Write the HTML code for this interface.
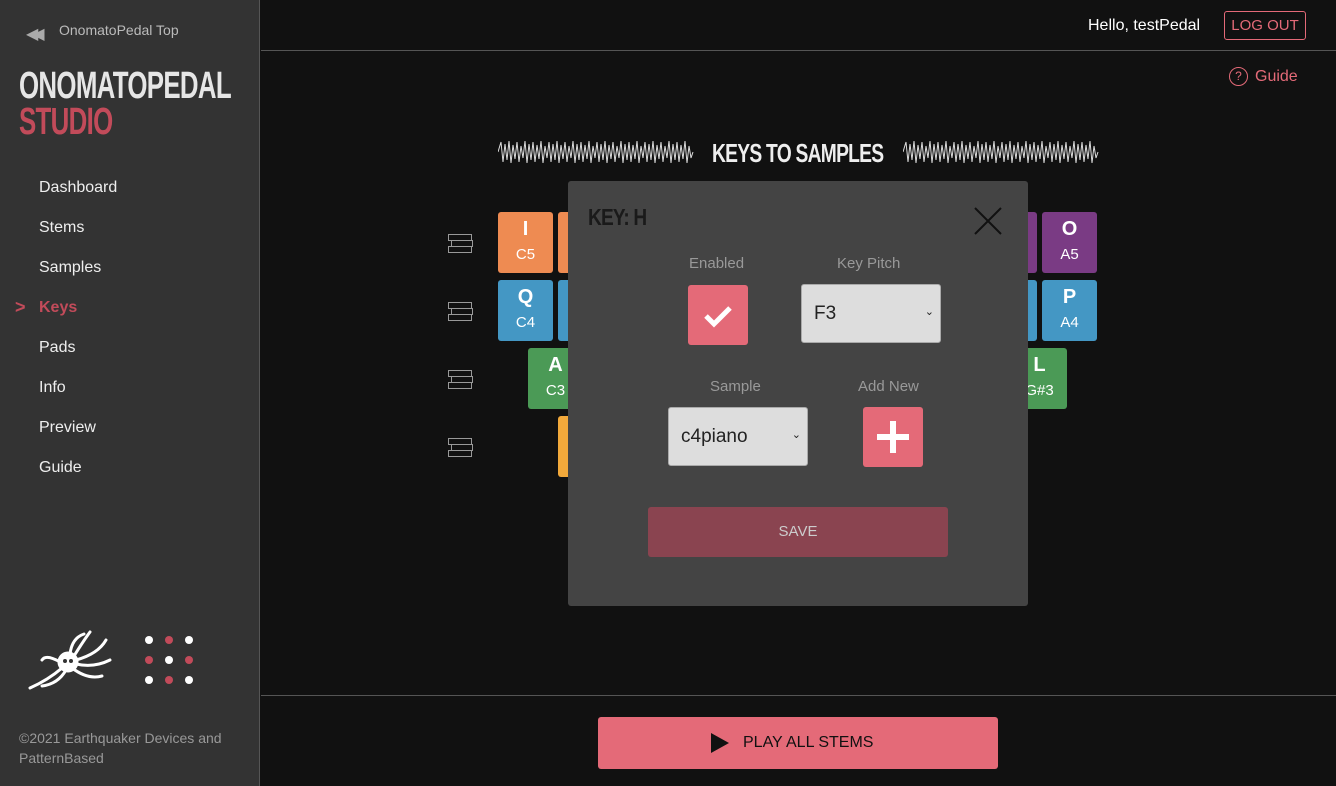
<!DOCTYPE html>
<html><head><style>
*{margin:0;padding:0;box-sizing:border-box}
body{width:1336px;height:786px;background:#111;font-family:"Liberation Sans",sans-serif;position:relative;overflow:hidden;color:#fff}
.side{position:absolute;left:0;top:0;width:260px;height:786px;background:#333;border-right:1px solid #555}
.top{position:absolute;left:59px;top:22px;font-size:14px;color:#bbb}
.logo{position:absolute;left:19px;top:68px;font-weight:bold;font-size:38px;line-height:36px;letter-spacing:-1px;transform:scaleX(.68);transform-origin:left;white-space:nowrap}
.nav{position:absolute;left:39px;font-size:16px;color:#eee}
.abs{position:absolute}
.key{position:absolute;width:55px;height:61px;border-radius:3px;text-align:center;color:#fff}
.key b{display:block;font-size:20px;margin-top:6px;height:28px}
.key span{font-size:15px}
.ico{position:absolute;left:448px;width:26px;height:20px}
.ico div{position:absolute;border:1.5px solid #999;height:7px}
</style></head><body>
<div class="side">
<div class="abs" style="left:26px;top:24px;color:#aaa;font-size:16px;letter-spacing:-6px">◀◀</div>
<div class="top">OnomatoPedal Top</div>
<div class="logo"><div style="color:#e6e6e6">ONOMATOPEDAL</div><div style="color:#c24b5a">STUDIO</div></div>
<div class="nav" style="top:179px">Dashboard</div>
<div class="nav" style="top:219px">Stems</div>
<div class="nav" style="top:259px">Samples</div>
<div class="nav" style="top:299px;color:#c24b5a;font-weight:bold">Keys</div>
<div class="abs" style="left:15px;top:297px;color:#c24b5a;font-size:18px;font-weight:bold">&gt;</div>
<div class="nav" style="top:339px">Pads</div>
<div class="nav" style="top:379px">Info</div>
<div class="nav" style="top:419px">Preview</div>
<div class="nav" style="top:459px">Guide</div>
<svg class="abs" style="left:28px;top:630px" width="86" height="62" viewBox="0 0 86 62" fill="none" stroke="#fff" stroke-width="3" stroke-linecap="round">
<circle cx="40" cy="32" r="9" fill="#fff"/><path d="M34 38 Q20 50 2 58 M38 40 Q30 54 14 56 M44 38 Q60 50 74 46 M48 30 Q70 24 78 10 M46 26 Q56 10 62 2 M42 24 Q44 8 56 4 M32 32 Q18 24 14 30 M48 34 Q66 38 82 30"/>
<circle cx="37" cy="31" r="2" fill="#333" stroke="none"/><circle cx="43" cy="31" r="2" fill="#333" stroke="none"/></svg>
<svg class="abs" style="left:143px;top:634px" width="54" height="54">
<g fill="#fff"><circle cx="6" cy="6" r="4"/><circle cx="46" cy="6" r="4"/><circle cx="26" cy="26" r="4"/><circle cx="6" cy="46" r="4"/><circle cx="46" cy="46" r="4"/></g>
<g fill="#c24b5a"><circle cx="26" cy="6" r="4"/><circle cx="6" cy="26" r="4"/><circle cx="46" cy="26" r="4"/><circle cx="26" cy="46" r="4"/></g></svg>
<div class="abs" style="left:19px;top:728px;font-size:14px;line-height:20px;color:#999">©2021 Earthquaker Devices and<br>PatternBased</div>
</div>
<div class="abs" style="left:261px;top:50px;width:1075px;height:1px;background:#555"></div>
<div class="abs" style="left:261px;top:695px;width:1075px;height:1px;background:#555"></div>
<div class="abs" style="left:1088px;top:17px;font-size:16px">Hello, testPedal</div>
<div class="abs" style="left:1224px;top:11px;width:82px;height:29px;border:1px solid #e46a78;border-radius:3px;color:#e46a78;font-size:15px;text-align:center;line-height:27px">LOG OUT</div>
<div class="abs" style="left:1229px;top:67px;width:19px;height:19px;border:1.5px solid #e46a78;border-radius:50%;color:#e46a78;font-size:12px;text-align:center;line-height:16px">?</div>
<div class="abs" style="left:1255px;top:68px;font-size:16px;color:#e46a78">Guide</div>
<svg class="abs" style="left:498px;top:138px" width="196" height="28"><polyline fill="none" stroke="#ddd" stroke-width="1" points="0,14 3,4 5,24 7,6 9,22 11,3 13,25 15,7 17,21 19,4 21,24 23,8 25,20 27,3 29,25 31,6 33,22 35,4 37,24 39,7 41,21 43,3 45,25 47,8 49,20 51,4 53,24 55,6 57,22 59,3 61,25 63,7 65,21 67,4 69,24 71,8 73,20 75,3 77,25 79,6 81,22 83,4 85,24 87,7 89,21 91,3 93,25 95,8 97,20 99,4 101,24 103,6 105,22 107,3 109,25 111,7 113,21 115,4 117,24 119,8 121,20 123,3 125,25 127,6 129,22 131,4 133,24 135,7 137,21 139,3 141,25 143,8 145,20 147,4 149,24 151,6 153,22 155,3 157,25 159,7 161,21 163,4 165,24 167,8 169,20 171,3 173,25 175,6 177,22 179,4 181,24 183,7 185,21 187,3 189,25 191,8 193,20 195,14"/></svg>
<svg class="abs" style="left:903px;top:138px" width="196" height="28"><polyline fill="none" stroke="#ddd" stroke-width="1" points="0,14 3,4 5,24 7,6 9,22 11,3 13,25 15,7 17,21 19,4 21,24 23,8 25,20 27,3 29,25 31,6 33,22 35,4 37,24 39,7 41,21 43,3 45,25 47,8 49,20 51,4 53,24 55,6 57,22 59,3 61,25 63,7 65,21 67,4 69,24 71,8 73,20 75,3 77,25 79,6 81,22 83,4 85,24 87,7 89,21 91,3 93,25 95,8 97,20 99,4 101,24 103,6 105,22 107,3 109,25 111,7 113,21 115,4 117,24 119,8 121,20 123,3 125,25 127,6 129,22 131,4 133,24 135,7 137,21 139,3 141,25 143,8 145,20 147,4 149,24 151,6 153,22 155,3 157,25 159,7 161,21 163,4 165,24 167,8 169,20 171,3 173,25 175,6 177,22 179,4 181,24 183,7 185,21 187,3 189,25 191,8 193,20 195,14"/></svg>
<div class="abs" style="left:712px;top:138px;font-weight:bold;font-size:26px;color:#eee;letter-spacing:-1px;transform:scaleX(.74);transform-origin:left;white-space:nowrap">KEYS TO SAMPLES</div>
<div class="ico" style="top:234px"><div style="left:0;top:0;width:24px"></div><div style="left:3px;top:6px;width:22px"></div><div style="left:0;top:12px;width:24px"></div></div>
<div class="ico" style="top:302px"><div style="left:0;top:0;width:24px"></div><div style="left:3px;top:6px;width:22px"></div><div style="left:0;top:12px;width:24px"></div></div>
<div class="ico" style="top:370px"><div style="left:0;top:0;width:24px"></div><div style="left:3px;top:6px;width:22px"></div><div style="left:0;top:12px;width:24px"></div></div>
<div class="ico" style="top:438px"><div style="left:0;top:0;width:24px"></div><div style="left:3px;top:6px;width:22px"></div><div style="left:0;top:12px;width:24px"></div></div>
<div class="key" style="left:498px;top:212px;background:#ee8b52"><b>I</b><span>C5</span></div>
<div class="key" style="left:558px;top:212px;background:#ee8b52"></div>
<div class="key" style="left:498px;top:280px;background:#4497c4"><b>Q</b><span>C4</span></div>
<div class="key" style="left:558px;top:280px;background:#4497c4"></div>
<div class="key" style="left:528px;top:348px;background:#4b9a56"><b>A</b><span>C3</span></div>
<div class="key" style="left:558px;top:416px;background:#f2a93b"></div>
<div class="key" style="left:982px;top:212px;background:#7a3b84"></div>
<div class="key" style="left:1042px;top:212px;background:#7a3b84"><b>O</b><span>A5</span></div>
<div class="key" style="left:982px;top:280px;background:#4497c4"></div>
<div class="key" style="left:1042px;top:280px;background:#4497c4"><b>P</b><span>A4</span></div>
<div class="key" style="left:1012px;top:348px;background:#4b9a56"><b>L</b><span>G#3</span></div>
<div class="abs" style="left:568px;top:181px;width:460px;height:425px;background:#444;border-radius:3px"></div>
<div class="abs" style="left:588px;top:204px;font-weight:bold;font-size:23px;color:#1a1a1a;letter-spacing:-1px;transform:scaleX(.83);transform-origin:left;white-space:nowrap">KEY: H</div>
<svg class="abs" style="left:973px;top:206px" width="30" height="30"><path d="M2 2L28 28M28 2L2 28" stroke="#111" stroke-width="2"/></svg>
<div class="abs" style="left:689px;top:255px;font-size:15px;color:#999">Enabled</div>
<div class="abs" style="left:837px;top:255px;font-size:15px;color:#999">Key Pitch</div>
<div class="abs" style="left:688px;top:285px;width:60px;height:60px;background:#e46a78;border-radius:3px"><svg width="60" height="60"><path d="M18 31l8 8 16-16" stroke="#fff" stroke-width="5" fill="none"/></svg></div>
<div class="abs" style="left:801px;top:284px;width:140px;height:59px;background:#ddd;border:1px solid #aaa;border-radius:3px;color:#222;font-size:19px;padding:18px 0 0 12px">F3<span style="position:absolute;right:6px;top:20px;font-size:11px">⌄</span></div>
<div class="abs" style="left:710px;top:378px;font-size:15px;color:#999">Sample</div>
<div class="abs" style="left:858px;top:378px;font-size:15px;color:#999">Add New</div>
<div class="abs" style="left:668px;top:407px;width:140px;height:59px;background:#ddd;border:1px solid #aaa;border-radius:3px;color:#222;font-size:19px;padding:18px 0 0 12px">c4piano<span style="position:absolute;right:6px;top:20px;font-size:11px">⌄</span></div>
<div class="abs" style="left:863px;top:407px;width:60px;height:60px;background:#e46a78;border-radius:3px"><svg width="60" height="60"><path d="M30 14v32M14 30h32" stroke="#fff" stroke-width="6"/></svg></div>
<div class="abs" style="left:648px;top:507px;width:300px;height:50px;background:#8a4450;border-radius:3px;color:#ccc;font-size:15px;text-align:center;line-height:50px">SAVE</div>
<div class="abs" style="left:598px;top:717px;width:400px;height:52px;background:#e46a78;border-radius:3px;color:#111;font-size:16px;line-height:52px;padding-left:145px">PLAY ALL STEMS</div>
<svg class="abs" style="left:711px;top:733px" width="18" height="20"><path d="M0 0L18 10L0 20Z" fill="#111"/></svg>
</body></html>
